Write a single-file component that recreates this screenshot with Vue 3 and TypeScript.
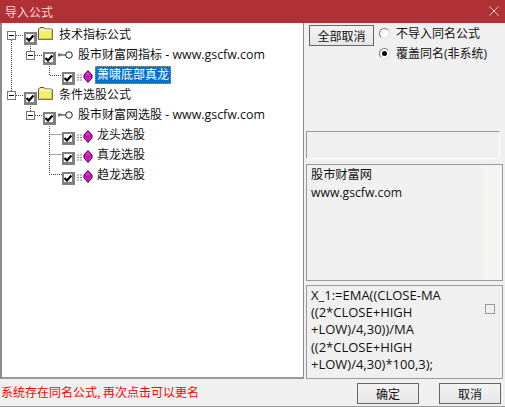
<script setup lang="ts">
interface Row {
  indent: number
  expander: boolean
  icon: 'folder' | 'key' | 'gem'
  label: string
  url?: string
  selected?: boolean
}
const rows: Row[] = [
  { indent: 0, expander: true, icon: 'folder', label: '技术指标公式' },
  { indent: 19, expander: true, icon: 'key', label: '股市财富网指标', url: ' - www.gscfw.com' },
  { indent: 38, expander: false, icon: 'gem', label: '萧啸底部真龙', selected: true },
  { indent: 0, expander: true, icon: 'folder', label: '条件选股公式' },
  { indent: 19, expander: true, icon: 'key', label: '股市财富网选股', url: ' - www.gscfw.com' },
  { indent: 38, expander: false, icon: 'gem', label: '龙头选股' },
  { indent: 38, expander: false, icon: 'gem', label: '真龙选股' },
  { indent: 38, expander: false, icon: 'gem', label: '趋龙选股' },
]
const formula = ['X_1:=EMA((CLOSE-MA', '((2*CLOSE+HIGH', '+LOW)/4,30))/MA', '((2*CLOSE+HIGH', '+LOW)/4,30)*100,3);']
</script>

<template>
  <div class="win">
    <header class="title">
      <span>导入公式</span>
      <svg class="close" width="10" height="10" viewBox="0 0 10 10"><path d="M0.5 0.5L9.5 9.5M9.5 0.5L0.5 9.5" stroke="#f2d6d6" stroke-width="1" fill="none" /></svg>
    </header>
    <div class="body">
      <section class="tree">
        <svg class="lines" width="120" height="200" viewBox="0 0 120 200">
          <g stroke="#444" stroke-width="1" stroke-dasharray="1 1" fill="none">
            <path d="M11.5 15V66M16 10.5H24M16 70.5H24" />
            <path d="M30.5 19V26M35 30.5H43" />
            <path d="M49.5 39V50.5H62" />
            <path d="M30.5 79V86M35 90.5H43" />
            <path d="M49.5 99V149.5H62M49.5 109.5H62M49.5 129.5H62" />
          </g>
        </svg>
        <div v-for="(r, i) in rows" :key="i" class="row" :style="{ paddingLeft: r.indent + 7 + 'px' }">
          <span class="slot">
            <span v-if="r.expander" class="exp"><i></i></span>
          </span>
          <span class="chk">
            <svg width="8" height="8" viewBox="0 0 8 8"><path d="M0.5 4L3 6.5L7.5 1.5" stroke="#000" stroke-width="2.2" fill="none" /></svg>
          </span>
          <span class="ico">
            <svg v-if="r.icon === 'folder'" class="folder" width="15" height="13" viewBox="0 0 15 13">
              <path d="M0.5 12.5V2L2 0.5H6L7.5 2H13.5L14.5 3V12.5Z" fill="#f3ee6e" stroke="#555" stroke-width="1" />
              <path d="M1.5 3H13.5" stroke="#fff" stroke-width="1" />
              <path d="M14 4V12H2" stroke="#a8a020" stroke-width="1" fill="none" />
            </svg>
            <svg v-else-if="r.icon === 'key'" class="key" width="15" height="8" viewBox="0 0 15 8">
              <circle cx="11" cy="4" r="3.3" fill="#fff" stroke="#222" stroke-width="1" />
              <path d="M0.5 4H7.7M1 2.5V5.5M3 2.5V3.5" stroke="#222" stroke-width="1" fill="none" />
            </svg>
            <svg v-else class="gem" width="16" height="13" viewBox="0 0 16 13">
              <path d="M0 5H6M0 7.5H5M0 10H6" stroke="#888" stroke-width="1" fill="none" stroke-dasharray="2 1" />
              <path d="M11 0.5L15 5V8L11 12.5L7 8V5Z" fill="#f018d8" stroke="#201020" stroke-width="1" />
              <path d="M7.5 5.5L11 7L14.5 5.5M11 7V12" stroke="#801070" stroke-width="0.7" fill="none" />
            </svg>
          </span>
          <span class="label" :class="{ sel: r.selected }">{{ r.label }}<span v-if="r.url" class="url">{{ r.url }}</span></span>
        </div>
      </section>
      <aside class="side">
        <div class="controls">
          <button class="btn all" type="button">全部取消</button>
          <div class="radios">
            <label class="radio"><span class="dot"></span>不导入同名公式</label>
            <label class="radio"><span class="dot on"></span>覆盖同名(非系统)</label>
          </div>
        </div>
        <div class="group"></div>
        <div class="box info">
          <div>股市财富网</div>
          <div>www.gscfw.com</div>
        </div>
        <div class="box code">
          <div>
            <div v-for="l in formula" :key="l">{{ l }}</div>
          </div>
          <span class="square"></span>
        </div>
      </aside>
    </div>
    <footer class="foot">
      <span class="msg">系统存在同名公式, 再次点击可以更名</span>
      <div class="actions">
        <button class="btn act" type="button">确定</button>
        <button class="btn act" type="button">取消</button>
      </div>
    </footer>
  </div>
</template>

<style scoped>
.win {
  width: 505px;
  height: 407px;
  box-sizing: border-box;
  display: flex;
  flex-direction: column;
  background: #f0f0f0;
  border-bottom: 1px solid #9a9a9a;
  font-family: "Open Sans", "Noto Sans CJK SC", sans-serif;
  font-size: 12px;
  color: #111;
  overflow: hidden;
}
.title {
  height: 22px;
  flex: none;
  display: flex;
  align-items: center;
  justify-content: space-between;
  padding: 0 6px 1px 5px;
  background: #b03036;
  color: #f6dcdc;
  font-family: "Noto Sans CJK SC", sans-serif;
}
.body {
  flex: none;
  height: 356px;
  display: flex;
}
.tree {
  position: relative;
  flex: none;
  width: 304px;
  box-sizing: border-box;
  padding-top: 2px;
  background: #fff;
  border-left: 2px solid #8c8c8c;
  border-right: 1px solid #8c8c8c;
  border-bottom: 2px solid #9a9a9a;
}
.lines {
  position: absolute;
  left: -2px;
  top: 2px;
}
.row {
  position: relative;
  height: 20px;
  margin-left: -2px;
  display: flex;
  align-items: center;
}
.slot {
  width: 17px;
  flex: none;
  display: flex;
  align-items: center;
  height: 20px;
  padding-top: 1px;
  box-sizing: border-box;
}
.exp {
  width: 9px;
  height: 9px;
  box-sizing: border-box;
  border: 1px solid #777;
  background: #fff;
  display: flex;
  align-items: center;
  justify-content: center;
}
.exp i {
  width: 5px;
  height: 1px;
  background: #000;
}
.chk {
  flex: none;
  width: 13px;
  height: 13px;
  box-sizing: border-box;
  margin: 6px 1px 0 0;
  border-style: solid;
  border-color: #808080;
  border-width: 2px 3px 3px 2px;
  background: #fff;
  display: flex;
  align-items: center;
  justify-content: center;
}
.ico {
  flex: none;
  width: 21px;
  height: 20px;
  display: flex;
}
.folder {
  margin-top: 2px;
}
.key {
  margin: 6px 0 0 1px;
}
.gem {
  margin: 5px 0 0 1px;
}
.label {
  padding: 0 2px;
  margin-left: -2px;
  line-height: 18px;
  white-space: pre;
  font-size: 12px;
}
.url {
  font-size: 12.4px;
}
.sel {
  background: #0a70c8;
  color: #fff;
  outline: 1px dotted #d08a30;
  outline-offset: -1px;
}
.side {
  flex: none;
  width: 201px;
  box-sizing: border-box;
  padding: 0 2px 1px 2px;
  display: flex;
  flex-direction: column;
}
.controls {
  height: 108px;
  flex: none;
  display: flex;
  padding: 2px 0 0 3px;
  box-sizing: border-box;
  align-items: flex-start;
}
.btn {
  box-sizing: border-box;
  background: linear-gradient(#f4f4f4, #e6e6e6);
  border: 1px solid #666;
  font: inherit;
  color: #111;
  padding: 0;
}
.all {
  width: 65px;
  height: 21px;
  flex: none;
}
.radios {
  margin: -2px 0 0 5px;
  display: flex;
  flex-direction: column;
}
.radio {
  height: 20px;
  display: flex;
  align-items: center;
  gap: 6px;
  white-space: nowrap;
}
.dot {
  width: 11px;
  height: 11px;
  box-sizing: border-box;
  border: 1px solid;
  border-color: #777 #ddd #ddd #777;
  border-radius: 50%;
  background: #fff;
  display: flex;
  align-items: center;
  justify-content: center;
}
.dot.on::after {
  content: "";
  width: 5px;
  height: 5px;
  border-radius: 50%;
  background: #000;
}
.group {
  height: 28px;
  flex: none;
  width: 194px;
  box-sizing: border-box;
  border-top: 1px solid #9a9a9a;
  border-left: 1px solid #9a9a9a;
  border-right: 1px solid #fff;
  border-bottom: 1px solid #fff;
  margin-bottom: 5px;
}
.box {
  box-sizing: border-box;
  border: 1px solid #9a9a9a;
  padding: 1px 4px;
}
.info {
  height: 117px;
  flex: none;
  font-size: 12.2px;
  line-height: 18px;
  background: linear-gradient(90deg, #f0f0f0 176px, #f4f4f2 176px);
  margin-bottom: 4px;
}
.code {
  height: 94px;
  flex: none;
  position: relative;
  display: flex;
  font-size: 13px;
  line-height: 17.2px;
  padding-top: 1px;
}
.square {
  position: absolute;
  left: 178px;
  top: 18px;
  width: 10px;
  height: 10px;
  box-sizing: border-box;
  border: 1px solid #999;
  background: #f0f0f0;
}
.foot {
  flex: 1;
  display: flex;
  align-items: flex-start;
  justify-content: space-between;
  padding: 4px 4px 0 1px;
}
.msg {
  color: #f00;
  line-height: 16px;
  margin-top: 1px;
  font-family: "Noto Sans CJK SC", sans-serif;
}
.actions {
  display: flex;
  gap: 20px;
}
.act {
  width: 62px;
  height: 21px;
}
</style>
